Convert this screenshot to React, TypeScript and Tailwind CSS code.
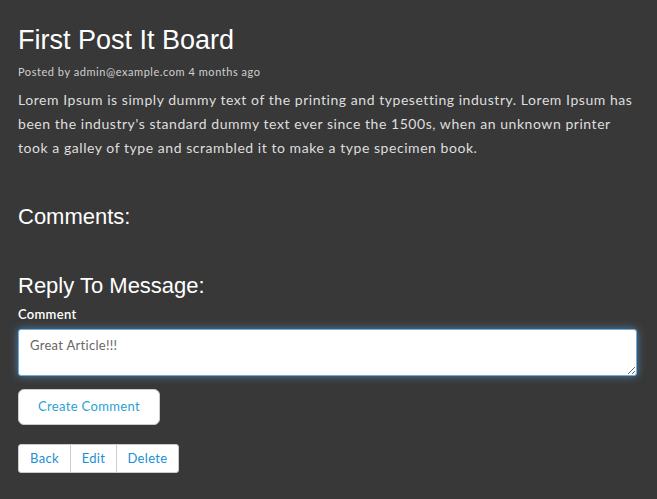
import React from "react";

export default function App() {
  return (
    <div className="min-h-[499px] w-full bg-[#383838] px-[18px] pt-[25px] pb-6 font-['Lato','Noto_Sans',sans-serif]">
      <h1 className="text-[27px] leading-[30px] text-white font-['Liberation_Sans',Arial,sans-serif]">
        First Post It Board
      </h1>
      <p className="mt-[9px] text-[11px] leading-[16px] text-[#cfcfcf] tracking-[0.55px]">
        Posted by admin@example.com 4 months ago
      </p>
      <p className="mt-[8px] text-[14px] leading-[24px] text-[#dedede] tracking-[0.55px] whitespace-nowrap">
        Lorem Ipsum is simply dummy text of the printing and typesetting industry. Lorem Ipsum has
        <br />
        been the industry's standard dummy text ever since the 1500s, when an unknown printer
        <br />
        took a galley of type and scrambled it to make a type specimen book.
      </p>
      <h2 className="mt-[44px] text-[22px] leading-[26px] text-white font-['Liberation_Sans',Arial,sans-serif]">
        Comments:
      </h2>
      <h2 className="mt-[43px] text-[22px] leading-[26px] text-white font-['Liberation_Sans',Arial,sans-serif]">
        Reply To Message:
      </h2>
      <label className="mt-[6px] block text-[13px] leading-[18px] font-semibold text-white tracking-[0.3px]">Comment</label>
      <textarea
        className="mt-[6px] block h-[47px] w-[619px] resize-y rounded-[3px] border border-[#66afe9] bg-white px-[11px] pt-[6px] pb-[4px] text-[13px] leading-[18px] text-[#666] tracking-[0.3px] shadow-[0_0_8px_rgba(102,175,233,0.6)] outline-none"
        defaultValue="Great Article!!!"
      />
      <button className="mt-[13px] block h-[36px] w-[142px] rounded-[6px] border border-[#ccc] bg-white text-[13px] tracking-[0.35px] text-[#2a9fd6]">
        Create Comment
      </button>
      <div className="mt-[19px] flex h-[29px] w-fit">
        <button className="h-full w-[53px] rounded-l-[3px] border border-[#ccc] bg-white text-[13px] tracking-[0.35px] text-[#1a8fd6]">Back</button>
        <button className="-ml-px h-full w-[47px] border border-[#ccc] bg-white text-[13px] tracking-[0.35px] text-[#1a8fd6]">Edit</button>
        <button className="-ml-px h-full w-[63px] rounded-r-[3px] border border-[#ccc] bg-white text-[13px] tracking-[0.35px] text-[#1a8fd6]">Delete</button>
      </div>
    </div>
  );
}
